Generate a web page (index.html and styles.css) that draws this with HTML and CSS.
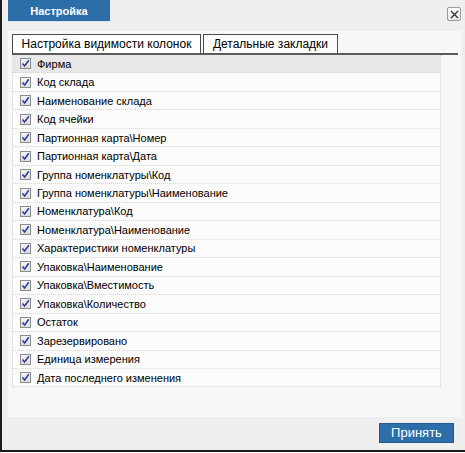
FILE: index.html
```html
<!DOCTYPE html>
<html lang="ru">
<head>
<meta charset="utf-8">
<link rel="stylesheet" href="styles.css">
</head>
<body>
<div class="window">
  <div class="titlebar">
    <div class="title">Настройка</div>
    <div class="close"><svg width="9" height="9" viewBox="0 0 9 9"><path d="M1 1 L8 8 M8 1 L1 8" stroke="#333" stroke-width="1.3" fill="none"/></svg></div>
  </div>
  <div class="panel">
    <div class="tabs">
      <div class="tab tab-active">Настройка видимости колонок</div>
      <div class="tab tab-second">Детальные закладки</div>
    </div>
    <div class="list">
      <div class="row row-hl"><span class="cb"><svg width="9" height="9" viewBox="0 0 9 9"><path d="M1.5 4.5 L3.6 7 L7.8 1.2" stroke="#2b3f9a" stroke-width="1.6" fill="none"/></svg></span>Фирма</div>
      <div class="row"><span class="cb"><svg width="9" height="9" viewBox="0 0 9 9"><path d="M1.5 4.5 L3.6 7 L7.8 1.2" stroke="#2b3f9a" stroke-width="1.6" fill="none"/></svg></span>Код склада</div>
      <div class="row"><span class="cb"><svg width="9" height="9" viewBox="0 0 9 9"><path d="M1.5 4.5 L3.6 7 L7.8 1.2" stroke="#2b3f9a" stroke-width="1.6" fill="none"/></svg></span>Наименование склада</div>
      <div class="row"><span class="cb"><svg width="9" height="9" viewBox="0 0 9 9"><path d="M1.5 4.5 L3.6 7 L7.8 1.2" stroke="#2b3f9a" stroke-width="1.6" fill="none"/></svg></span>Код ячейки</div>
      <div class="row"><span class="cb"><svg width="9" height="9" viewBox="0 0 9 9"><path d="M1.5 4.5 L3.6 7 L7.8 1.2" stroke="#2b3f9a" stroke-width="1.6" fill="none"/></svg></span>Партионная карта\Номер</div>
      <div class="row"><span class="cb"><svg width="9" height="9" viewBox="0 0 9 9"><path d="M1.5 4.5 L3.6 7 L7.8 1.2" stroke="#2b3f9a" stroke-width="1.6" fill="none"/></svg></span>Партионная карта\Дата</div>
      <div class="row"><span class="cb"><svg width="9" height="9" viewBox="0 0 9 9"><path d="M1.5 4.5 L3.6 7 L7.8 1.2" stroke="#2b3f9a" stroke-width="1.6" fill="none"/></svg></span>Группа номенклатуры\Код</div>
      <div class="row"><span class="cb"><svg width="9" height="9" viewBox="0 0 9 9"><path d="M1.5 4.5 L3.6 7 L7.8 1.2" stroke="#2b3f9a" stroke-width="1.6" fill="none"/></svg></span>Группа номенклатуры\Наименование</div>
      <div class="row"><span class="cb"><svg width="9" height="9" viewBox="0 0 9 9"><path d="M1.5 4.5 L3.6 7 L7.8 1.2" stroke="#2b3f9a" stroke-width="1.6" fill="none"/></svg></span>Номенклатура\Код</div>
      <div class="row"><span class="cb"><svg width="9" height="9" viewBox="0 0 9 9"><path d="M1.5 4.5 L3.6 7 L7.8 1.2" stroke="#2b3f9a" stroke-width="1.6" fill="none"/></svg></span>Номенклатура\Наименование</div>
      <div class="row"><span class="cb"><svg width="9" height="9" viewBox="0 0 9 9"><path d="M1.5 4.5 L3.6 7 L7.8 1.2" stroke="#2b3f9a" stroke-width="1.6" fill="none"/></svg></span>Характеристики номенклатуры</div>
      <div class="row"><span class="cb"><svg width="9" height="9" viewBox="0 0 9 9"><path d="M1.5 4.5 L3.6 7 L7.8 1.2" stroke="#2b3f9a" stroke-width="1.6" fill="none"/></svg></span>Упаковка\Наименование</div>
      <div class="row"><span class="cb"><svg width="9" height="9" viewBox="0 0 9 9"><path d="M1.5 4.5 L3.6 7 L7.8 1.2" stroke="#2b3f9a" stroke-width="1.6" fill="none"/></svg></span>Упаковка\Вместимость</div>
      <div class="row"><span class="cb"><svg width="9" height="9" viewBox="0 0 9 9"><path d="M1.5 4.5 L3.6 7 L7.8 1.2" stroke="#2b3f9a" stroke-width="1.6" fill="none"/></svg></span>Упаковка\Количество</div>
      <div class="row"><span class="cb"><svg width="9" height="9" viewBox="0 0 9 9"><path d="M1.5 4.5 L3.6 7 L7.8 1.2" stroke="#2b3f9a" stroke-width="1.6" fill="none"/></svg></span>Остаток</div>
      <div class="row"><span class="cb"><svg width="9" height="9" viewBox="0 0 9 9"><path d="M1.5 4.5 L3.6 7 L7.8 1.2" stroke="#2b3f9a" stroke-width="1.6" fill="none"/></svg></span>Зарезервировано</div>
      <div class="row"><span class="cb"><svg width="9" height="9" viewBox="0 0 9 9"><path d="M1.5 4.5 L3.6 7 L7.8 1.2" stroke="#2b3f9a" stroke-width="1.6" fill="none"/></svg></span>Единица измерения</div>
      <div class="row"><span class="cb"><svg width="9" height="9" viewBox="0 0 9 9"><path d="M1.5 4.5 L3.6 7 L7.8 1.2" stroke="#2b3f9a" stroke-width="1.6" fill="none"/></svg></span>Дата последнего изменения</div>
    </div>
  </div>
  <div class="footer">
    <div class="accept">Принять</div>
  </div>
</div>
</body>
</html>
```

FILE: styles.css
```css
html, body {
  margin: 0;
  padding: 0;
  background: #ffffff;
}
body {
  font-family: "Liberation Sans", Arial, sans-serif;
  color: #000;
}
.window {
  width: 465px;
  height: 452px;
  box-sizing: border-box;
  background: #efefef;
  border-left: 2px solid #1c1c1c;
  border-bottom: 2px solid #1c1c1c;
  padding-left: 6px;
  display: flex;
  flex-direction: column;
}
.titlebar {
  height: 31px;
  display: flex;
  align-items: flex-start;
}
.title {
  width: 102px;
  height: 21px;
  background: #2c6ea8;
  color: #fff;
  font-weight: bold;
  font-size: 11px;
  line-height: 22px;
  text-align: center;
  border-bottom: 1px solid #d9e3ec;
}
.close {
  margin-left: auto;
  margin-right: 4px;
  margin-top: 7px;
  width: 12px;
  height: 12px;
  border: 1px solid #9a9a9a;
  border-radius: 2px;
  background: linear-gradient(#ffffff, #e6e6e6);
  display: flex;
  align-items: center;
  justify-content: center;
}
.close svg { display: block; }
.panel {
  width: 453px;
  height: 386px;
  box-sizing: border-box;
  background: #f7f7f7;
  padding: 3px 3px 0 4px;
}
.tabs {
  display: flex;
  gap: 2px;
  height: 21px;
  box-sizing: border-box;
  border-bottom: 2px solid #5a5a5a;
}
.tab {
  height: 19px;
  box-sizing: border-box;
  border: 1px solid #4a4a4a;
  border-bottom: none;
  font-size: 12px;
  line-height: 19px;
  text-align: center;
  background: #fbfbfb;
}
.tab-active {
  width: 189px;
  background: #ffffff;
  border-left-width: 1px;
  border-top-width: 1px;
}
.tab-second {
  width: 135px;
}
.list {
  width: 429px;
  box-sizing: border-box;
  border-left: 1px dotted #cfcfcf;
  border-right: 1px dotted #cfcfcf;
  background: #fbfbfb;
}
.row {
  height: 18.47px;
  box-sizing: border-box;
  border-bottom: 1px dotted #d6d6d6;
  display: flex;
  align-items: center;
  padding-left: 7px;
  font-size: 11px;
  white-space: nowrap;
}
.row-hl {
  background: #e8e8e8;
}
.cb {
  width: 11px;
  height: 11px;
  box-sizing: border-box;
  border: 1px solid #8c8c8c;
  background: linear-gradient(#f4f4f4, #dcdcdc);
  margin-right: 6px;
  display: flex;
  align-items: center;
  justify-content: center;
  flex: none;
}
.cb svg { display: block; }
.footer {
  display: flex;
  justify-content: flex-end;
  padding-top: 6px;
  padding-right: 11px;
}
.accept {
  width: 75px;
  height: 20px;
  box-sizing: border-box;
  background: #2c6ea8;
  border: 1px solid #215b8e;
  color: #fff;
  font-size: 13px;
  line-height: 18px;
  text-align: center;
}
```
